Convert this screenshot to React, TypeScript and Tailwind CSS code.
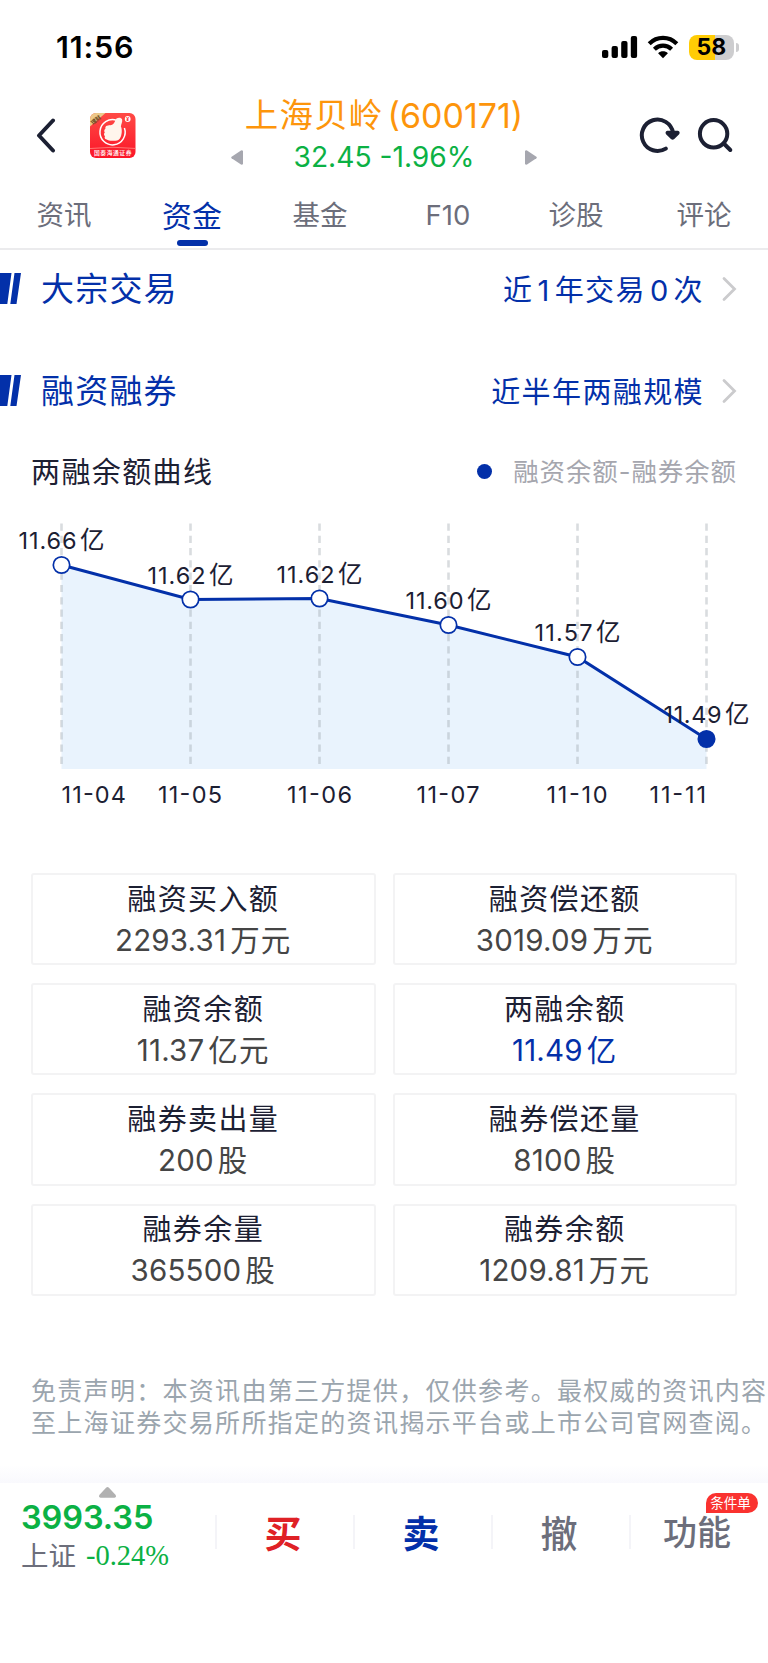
import React from 'react';
import clsx from 'clsx';

const TABS = ['资讯', '资金', '基金', 'F10', '诊股', '评论'];

const POINTS = [
    { x: 61.5, y: 53, label: '11.66', date: '11-04', dateX: 61.5, width: 64.5 },
    { x: 190.5, y: 87.5, label: '11.62', date: '11-05', dateX: 158, width: 64 },
    { x: 319.5, y: 86.5, label: '11.62', date: '11-06', dateX: 287, width: 65 },
    { x: 448.5, y: 113, label: '11.60', date: '11-07', dateX: 416.5, width: 63 },
    { x: 577.5, y: 145, label: '11.57', date: '11-10', dateX: 546.5, width: 61 },
    { x: 706.5, y: 227, label: '11.49', date: '11-11', dateX: 649.5, width: 56.5 },
];

const STATS = [
    { title: '融资买入额', value: '2293.31', unit: '万元' },
    { title: '融资偿还额', value: '3019.09', unit: '万元' },
    { title: '融资余额', value: '11.37', unit: '亿元' },
    { title: '两融余额', value: '11.49', unit: '亿', highlight: true },
    { title: '融券卖出量', value: '200', unit: '股' },
    { title: '融券偿还量', value: '8100', unit: '股' },
    { title: '融券余量', value: '365500', unit: '股' },
    { title: '融券余额', value: '1209.81', unit: '万元' },
];

export default function App() {
    return (
        <div className="flex flex-col w-[768px] h-[1663px] overflow-hidden bg-white text-[#1c2033] font-['Inter','Noto_Sans_CJK_SC',sans-serif]">
            <StatusBar />
            <Header />
            <Tabs />
            <SectionRow title="大宗交易">
                近<span className="mx-[4px]">1</span>年交易<span className="mx-[4px]">0</span>次
            </SectionRow>
            <SectionRow title="融资融券" className="mt-6">近半年两融规模</SectionRow>
            <div className="flex items-center justify-between h-[82px] pl-[31px] pr-[31px] shrink-0">
                <p className="pt-[3px] text-[29px] tracking-[1.4px]">两融余额曲线</p>
                <div className="flex items-center">
                    <span className="w-[15px] h-[15px] rounded-full bg-[#0330a9] mr-[21px]" />
                    <p className="pt-[2px] text-[25.5px] tracking-[0.9px] text-[#a5a6ae]">融资余额-融券余额</p>
                </div>
            </div>
            <BalanceChart />
            <div className="grid grid-cols-2 gap-x-[17px] gap-y-[18px] px-[31px] shrink-0">
                {STATS.map((stat) => <StatCard key={stat.title} {...stat} />)}
            </div>
            <div className="mt-[79px] pl-[31px] text-[25px] leading-[32px] tracking-[1.3px] text-[#9ba5ae] whitespace-nowrap shrink-0">
                <p>免责声明：本资讯由第三方提供，仅供参考。最权威的资讯内容</p>
                <p>至上海证券交易所所指定的资讯揭示平台或上市公司官网查阅。</p>
            </div>
            <TradeBar />
        </div>
    )
}

const StatusBar = () => {
    return (
        <div className="flex items-center justify-between h-[94px] pl-[56px] pr-[29px] shrink-0 text-black">
            <p className="text-[30.5px] font-semibold tracking-[0.8px]">11:56</p>
            <div className="flex items-center">
                <svg width="36" height="22" viewBox="0 0 36 22">
                    <rect x="0" y="14" width="6.3" height="8" rx="2" />
                    <rect x="9.6" y="10" width="6.3" height="12" rx="2" />
                    <rect x="19.2" y="5" width="6.3" height="17" rx="2" />
                    <rect x="28.8" y="0" width="6.3" height="22" rx="2" />
                </svg>
                <svg className="ml-[9px]" width="32" height="24" viewBox="0 0 32 24" fill="none" stroke="#000" strokeWidth="4.2">
                    <path d="M2.2 8.8C10 1 22 1 29.8 8.8" />
                    <path d="M7.4 14.2c5-4.8 12.2-4.8 17.2 0" />
                    <path d="M16 23.2l-4.9-5c2.7-2.6 7.1-2.6 9.8 0z" fill="#000" stroke="none" />
                </svg>
                <div className="flex items-center justify-center ml-[10px] w-[45px] h-[25px] rounded-[8px] bg-linear-to-r from-[#ffcc05] from-58% to-[#cdcdcf] to-58%">
                    <span className="text-[23px] leading-none font-bold tracking-[0.2px]">58</span>
                </div>
                <span className="ml-[2px] w-[3px] h-[9px] rounded-r-full bg-[#cdcdcf]" />
            </div>
        </div>
    )
}

const Header = () => {
    return (
        <div className="flex items-start h-[96px] shrink-0">
            <svg className="ml-[36px] mt-[24px]" width="21" height="35" viewBox="0 0 21 35" fill="none" stroke="#1c2033" strokeWidth="4" strokeLinecap="round" strokeLinejoin="round">
                <path d="M17 2.5L3 17.5L17 32.5" />
            </svg>
            <BrokerLogo />
            <div className="flex flex-col items-center w-[306px] ml-[95px]">
                <p className="flex items-center h-[38px] mt-[2px] text-[33.5px] text-[#fd950b] whitespace-nowrap">
                    <span className="tracking-[1.2px]">上海贝岭</span>
                    <span className="ml-[4px] text-[34px]">(600171)</span>
                </p>
                <div className="flex items-center justify-between w-full h-[46px]">
                    <svg width="12" height="15" viewBox="0 0 12 15" fill="#a6a7af">
                        <path d="M12 1v13q-.8 1-2 .5L.6 8.2q-.8-.7 0-1.4L10 .5q1.2-.5 2 .5z" />
                    </svg>
                    <p className="text-[28.2px] text-[#0bb144]">32.45 -1.96%</p>
                    <svg width="12" height="15" viewBox="0 0 12 15" fill="#a6a7af">
                        <path d="M0 1v13q.8 1 2 .5l9.4-6.3q.8-.7 0-1.4L2 .5Q.8 0 0 1z" />
                    </svg>
                </div>
            </div>
            <svg className="ml-[102px] mt-[22px]" width="42" height="40" viewBox="0 0 42 40">
                <path d="M26.8 32.6A15.7 15.7 0 1 1 34 16.5" fill="none" stroke="#1c2033" strokeWidth="4" strokeLinecap="round" />
                <path d="M28.6 15.8h10q1.8.5.6 2l-4.6 4.5q-1 .8-2 0l-4.6-4.5q-1.200-1.500.6-2z" fill="#1c2033" stroke="#1c2033" strokeWidth="2" strokeLinejoin="round" />
            </svg>
            <svg className="ml-[16px] mt-[22px]" width="38" height="40" viewBox="0 0 38 40" fill="none" stroke="#1c2033" strokeWidth="4" strokeLinecap="round">
                <circle cx="16.6" cy="17.8" r="13.7" />
                <path d="M27 27.800L33.3 34" />
            </svg>
        </div>
    )
}

const BrokerLogo = () => {
    return (
        <svg className="ml-[33px] mt-[19px]" width="46" height="45" viewBox="0 0 46 45">
            <defs>
                <linearGradient id="logoBg" x1="0" y1="0" x2="0" y2="1">
                    <stop offset="0" stopColor="#ff4a45" />
                    <stop offset="1" stopColor="#fb1528" />
                </linearGradient>
                <clipPath id="logoClip"><rect width="45.5" height="45" rx="6" /></clipPath>
            </defs>
            <g clipPath="url(#logoClip)">
                <rect width="46" height="45" fill="url(#logoBg)" />
                <path d="M0 0h15.500L0 13.500z" fill="#ecc98a" />
                <text x="6" y="9" fontSize="5.5" fontWeight="700" fill="#6b4a1e" textAnchor="middle" transform="rotate(-40 6 7)">理财</text>
                <path d="M26.500 7.300A12.600 12.600 0 1 0 34.400 15" fill="none" stroke="#fff" strokeWidth="1.5" />
                <path d="M21.500 12c3-.6 3.400-4.600 5-6.400 1.600-1.500 5-1.200 5.600.8.600 2.400-1 4.800-1.200 7 1.600 3 .9 9.400-1 12-1.500 2.200-4.800 2.600-7.800 2.400-2.200 0-4.300-.2-5.500-1.200-2.300-.8-2.200-2.500-1.600-3.400-1.400-1.200-1.200-2.900-.2-3.700-1-1.400-.6-3 .6-3.800-.5-3.600 2.800-3.300 6.100-3.700z" fill="#fff5ec" />
                <circle cx="37.7" cy="6" r="2.9" fill="#fff" />
                <text x="37.7" y="8" fontSize="5" fontWeight="700" fill="#f22" textAnchor="middle">¥</text>
                <path d="M0 35.500Q23 33 46 35.500" fill="none" stroke="#ff8b84" strokeWidth=".8" />
                <text x="4" y="42.3" fontSize="5.8" fontWeight="500" fill="#fff" textLength="37.500">国泰海通证券</text>
            </g>
        </svg>
    )
}

const Tabs = () => {
    return (
        <div className="grid grid-cols-6 h-[60px] border-b-2 border-[#ebebed] shrink-0">
            {TABS.map((tab) => {
                const active = tab === '资金';
                return (
                    <div key={tab} className="relative flex justify-center items-center pb-[6px]">
                        <span className={clsx('leading-none', active ? 'text-[30px] text-[#0330a9]' : 'text-[27.5px] text-[#6c6e7b]')}>{tab}</span>
                        {active && <span className="absolute bottom-[2px] w-[31px] h-[6px] rounded-full bg-[#0330a9]" />}
                    </div>
                )
            })}
        </div>
    )
}

interface SectionRowProps {
    title: string;
    className?: string;
    children: React.ReactNode;
}

const SectionRow = ({ title, className = "", children }: SectionRowProps) => {
    return (
        <div className={clsx('flex items-center h-[78px] pr-[31px] shrink-0 text-[#0330a9]', className)}>
            <svg className="-mt-[2px]" width="21" height="31" viewBox="0 0 21 31" fill="#0330a9">
                <path d="M0 0h11.500L7.300 31H0zM14.500 0H21l-4.500 31H10.300z" />
            </svg>
            <p className="ml-[20px] pt-[2px] text-[33px] tracking-[1.2px]">{title}</p>
            <p className="ml-auto pt-[3px] text-[29px] tracking-[1.4px]">{children}</p>
            <svg className="ml-[18px] -mt-[1px]" width="15" height="26" viewBox="0 0 15 26" fill="none" stroke="#cbcbcd" strokeWidth="2.8" strokeLinecap="round">
                <path d="M2 2.500L12.500 13L2 23.500" />
            </svg>
        </div>
    )
}

const BalanceChart = () => {
    const line = POINTS.map((p) => `${p.x},${p.y}`).join(' ');
    const last = POINTS.length - 1;

    return (
        <svg className="shrink-0" width="768" height="361" viewBox="0 0 768 361">
            <polygon points={`61.5,257 ${line} 706.5,257`} fill="#e9f3fd" />
            {POINTS.map((p) => (
                <line key={p.x} x1={p.x} x2={p.x} y1="11.5" y2="253" stroke="#8c969e" strokeOpacity=".33" strokeWidth="2.6" strokeDasharray="7.2 5.08" />
            ))}
            <polyline points={line} fill="none" stroke="#0330a9" strokeWidth="3" />
            {POINTS.map((p, i) => (
                <g key={p.x} fill="#1c2033" fontSize="23.5">
                    <circle cx={p.x} cy={p.y} r="8.2" fill={i === last ? '#0330a9' : '#fff'} stroke="#0330a9" strokeWidth="1.7" />
                    <text x={p.x - 43} y={p.y - 16} textLength="58">{p.label}</text>
                    <text x={p.x + 18.5} y={p.y - 16} fontSize="24.5">亿</text>
                    <text x={p.dateX} y="291" textLength={p.width}>{p.date}</text>
                </g>
            ))}
        </svg>
    )
}

interface StatCardProps {
    title: string;
    value: string;
    unit: string;
    highlight?: boolean;
}

const StatCard = ({ title, value, unit, highlight }: StatCardProps) => {
    return (
        <div className="flex flex-col items-center justify-center h-[92.2px] pt-[1px] border-2 border-[#f3f3f4] rounded-[3px]">
            <p className="text-[29px] leading-[40px] tracking-[1.4px]">{title}</p>
            <p className={clsx('flex text-[29.5px] leading-[40px]', highlight ? 'text-[#0330a9]' : 'text-[#454545]')}>
                <span className="tracking-[0.2px]">{value}</span>
                <span className="ml-[4px] tracking-[1.2px]">{unit}</span>
            </p>
        </div>
    )
}

const TradeBar = () => {
    return (
        <div className="flex flex-col mt-auto h-[198px] shrink-0">
            <div className="h-[18px] bg-linear-to-b from-white to-[#f9f9fd]" />
            <div className="flex items-start">
                <div className="flex flex-col w-[215px] pl-[21px] pt-[4px]">
                    <svg className="ml-[78px]" width="17" height="11" viewBox="0 0 17 11" fill="#b1b1b1">
                        <path d="M7.3.6q1.2-1 2.4 0l7 7.500q.8 2.500-1.200 2.700h-14Q-.3 10.600.3 8.100z" />
                    </svg>
                    <p className="text-[32.5px] leading-[39px] font-semibold text-[#0bb144] tracking-[-0.1px]">3993.35</p>
                    <p className="flex items-center h-[38px] whitespace-nowrap">
                        <span className="pt-[2px] text-[27.500px] text-[#6c6e7b]">上证</span>
                        <span className="ml-[10px] text-[28.5px] text-[#0bb144] font-['Liberation_Serif',serif]">-0.24%</span>
                    </p>
                </div>
                <TradeAction className="font-bold text-[#df2126]">买</TradeAction>
                <TradeAction className="font-bold text-[#0330a9]">卖</TradeAction>
                <TradeAction className="font-medium text-[#6c6e7b]">撤</TradeAction>
                <TradeAction className="font-medium text-[#6c6e7b]">
                    <span className="text-[34px] -mt-[2px]">功能</span>
                    <span className="absolute left-[75px] -top-[22px] flex items-center justify-center w-[52px] h-[20px] rounded-[10px] rounded-bl-none bg-[#fa322f] text-white text-[13.5px] font-normal pt-[1px] pr-[3px]">条件单</span>
                </TradeAction>
            </div>
        </div>
    )
}

const TradeAction = ({ className = "", children }: { className?: string; children: React.ReactNode }) => {
    return (
        <div className={clsx('relative flex items-center justify-center w-[138px] h-[34px] pt-[4px] pr-[4px] mt-[32px] border-l-2 border-[#f4f4f8] text-[37px] leading-none', className)}>
            {children}
        </div>
    )
}
